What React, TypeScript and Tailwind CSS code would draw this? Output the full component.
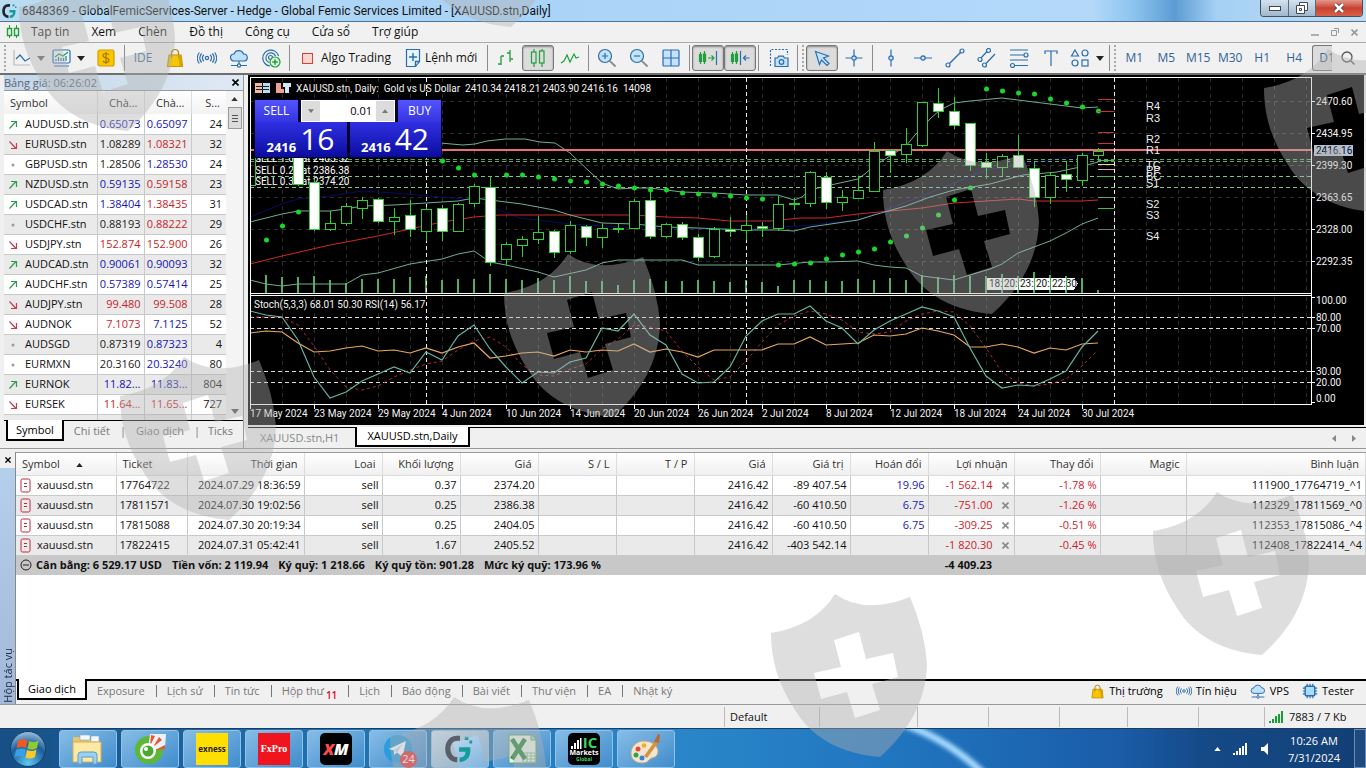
import React, { useState } from "react";

const BLUE = "#2a6db0";
const GREEN = "#1fa03c";

// --- DATA ---

const menuItems = ["Tap tin", "Xem", "Chèn", "Đồ thị", "Công cụ", "Cửa sổ", "Trợ giúp"];
const timeframes = ["M1", "M5", "M15", "M30", "H1", "H4"];

// symbol, direction, bid, bid colour, ask, ask colour, spread
const quotes: [string, string, string, string, string, string, string][] = [
  ["AUDUSD.stn", "up", "0.65073", "b", "0.65097", "b", "24"],
  ["EURUSD.stn", "down", "1.08289", "k", "1.08321", "r", "32"],
  ["GBPUSD.stn", "flat", "1.28506", "k", "1.28530", "b", "24"],
  ["NZDUSD.stn", "up", "0.59135", "b", "0.59158", "r", "23"],
  ["USDCAD.stn", "up", "1.38404", "b", "1.38435", "r", "31"],
  ["USDCHF.stn", "flat", "0.88193", "k", "0.88222", "r", "29"],
  ["USDJPY.stn", "down", "152.874", "r", "152.900", "r", "26"],
  ["AUDCAD.stn", "up", "0.90061", "b", "0.90093", "b", "32"],
  ["AUDCHF.stn", "up", "0.57389", "b", "0.57414", "b", "25"],
  ["AUDJPY.stn", "down", "99.480", "r", "99.508", "r", "28"],
  ["AUDNOK", "down", "7.1073", "r", "7.1125", "b", "52"],
  ["AUDSGD", "flat", "0.87319", "k", "0.87323", "b", "4"],
  ["EURMXN", "flat", "20.3160", "k", "20.3240", "b", "80"],
  ["EURNOK", "up", "11.82...", "b", "11.83...", "b", "804"],
  ["EURSEK", "down", "11.64...", "r", "11.65...", "r", "727"],
  ["EURSGD", "up", "1.45287", "b", "1.45317", "b", "8"],
];

const tone: Record<string, string> = {
  b: "text-[#1414b4]",
  r: "text-[#c81e28]",
  k: "text-[#1a1a1a]",
};

const columns: [string, string][] = [
  ["Symbol", "w-[100px]"],
  ["Ticket", "w-[71px]"],
  ["Thời gian", "w-[117px]"],
  ["Loai", "w-[78px]"],
  ["Khối lượng", "w-[78px]"],
  ["Giá", "w-[78px]"],
  ["S / L", "w-[78px]"],
  ["T / P", "w-[78px]"],
  ["Giá", "w-[78px]"],
  ["Giá trị", "w-[78px]"],
  ["Hoán đổi", "w-[78px]"],
  ["Lợi nhuận", "w-[86px]"],
  ["Thay đổi", "w-[86px]"],
  ["Magic", "w-[86px]"],
  ["Bình luận", ""],
];

const positions = [
  ["17764722", "2024.07.29 18:36:59", "sell", "0.37", "2374.20", "", "", "2416.42", "-89 407.54", "19.96", "-1 562.14", "-1.78 %", "", "111900_17764719_^1"],
  ["17811571", "2024.07.30 19:02:56", "sell", "0.25", "2386.38", "", "", "2416.42", "-60 410.50", "6.75", "-751.00", "-1.26 %", "", "112329_17811569_^0"],
  ["17815088", "2024.07.30 20:19:34", "sell", "0.25", "2404.05", "", "", "2416.42", "-60 410.50", "6.75", "-309.25", "-0.51 %", "", "112353_17815086_^4"],
  ["17822415", "2024.07.31 05:42:41", "sell", "1.67", "2405.52", "", "", "2416.42", "-403 542.14", "", "-1 820.30", "-0.45 %", "", "112408_17822414_^4"],
];

const toolTabs = ["Exposure", "Lịch sử", "Tin tức", "Hộp thư", "Lịch", "Báo động", "Bài viết", "Thư viện", "EA", "Nhật ký"];

// x, body top, body bottom, high, low, filled
const candles: number[][] = [
  [298, 150, 184, 146, 186, 1], [314, 182, 229, 179, 231, 1], [330, 223, 229, 211, 231, 0],
  [346, 206, 223, 203, 226, 0], [362, 200, 208, 197, 219, 0], [378, 199, 221, 198, 223, 1],
  [394, 217, 221, 208, 235, 0], [410, 215, 229, 200, 237, 1], [426, 209, 231, 207, 241, 0],
  [442, 208, 231, 205, 241, 1], [458, 204, 231, 203, 232, 0], [474, 186, 203, 184, 207, 0],
  [490, 187, 262, 176, 266, 1], [506, 244, 259, 242, 265, 0], [522, 239, 245, 236, 257, 0],
  [538, 232, 239, 216, 244, 0], [554, 231, 252, 230, 258, 1], [570, 225, 251, 221, 254, 0],
  [586, 226, 237, 225, 246, 1], [602, 228, 237, 224, 248, 0], [618, 228, 229, 224, 233, 0],
  [634, 201, 228, 199, 229, 0], [650, 200, 236, 190, 239, 1], [666, 224, 236, 223, 238, 0],
  [682, 224, 237, 222, 240, 1], [698, 237, 257, 234, 261, 1], [714, 229, 256, 227, 258, 0],
  [730, 229, 231, 217, 237, 1], [746, 225, 230, 215, 240, 0], [762, 226, 228, 222, 237, 1],
  [778, 204, 228, 196, 231, 0], [794, 203, 204, 198, 210, 0], [810, 172, 203, 171, 207, 0],
  [826, 177, 202, 172, 209, 1], [842, 197, 202, 190, 211, 0], [858, 190, 198, 176, 198, 0],
  [874, 151, 191, 142, 191, 0], [890, 150, 155, 149, 173, 1], [906, 144, 154, 128, 163, 0],
  [922, 102, 145, 102, 147, 0], [938, 103, 111, 88, 118, 1], [954, 111, 125, 97, 129, 1],
  [970, 123, 165, 123, 171, 1], [986, 162, 167, 153, 179, 1], [1002, 156, 167, 154, 176, 0],
  [1018, 155, 167, 135, 167, 1], [1034, 168, 197, 162, 207, 1], [1050, 175, 197, 172, 204, 0],
  [1066, 174, 179, 161, 192, 1], [1082, 155, 180, 153, 186, 0], [1098, 151, 155, 148, 160, 0],
];

// tops of the volume bars, one bar every 16px from x = 266
const volumes = [
  275, 277, 277, 276, 280, 283, 279, 279, 279, 277, 276, 280, 279, 279, 274, 279, 280, 278, 280, 276, 281, 281, 285,
  280, 279, 281, 281, 280, 281, 282, 280, 282, 286, 280, 280, 281, 281, 279, 280, 278, 280, 275, 277, 275,
  276, 276, 274, 276, 272, 275, 276, 278, 290,
];

const sarDots: number[][] = [
  [266, 240], [282, 226], [298, 212], [442, 161], [458, 168], [474, 175], [506, 175], [522, 175], [538, 177],
  [554, 179], [570, 181], [586, 182], [602, 184], [618, 186], [634, 188], [650, 190], [666, 190], [682, 193],
  [698, 194], [714, 195], [730, 196], [746, 198], [762, 199], [778, 265], [794, 264], [810, 263], [826, 259],
  [842, 255], [858, 252], [874, 249], [890, 242], [906, 236], [922, 228], [938, 215], [954, 200], [970, 188],
  [986, 89], [1002, 91], [1018, 93], [1034, 94], [1050, 99], [1066, 103], [1082, 107], [1098, 111],
];

const bandUpper =
  "440,143 463,145 475,144 487,141 505,139 525,139 540,142 555,143 570,153 590,172 602,183 618,189 634,188 650,188 666,190 682,192 714,193 746,195 778,195 794,200 802,197 810,190 826,186 858,179 866,173 874,166 890,156 906,146 915,135 930,119 940,110 954,103 970,101 1002,98 1034,102 1066,106 1082,108 1098,107";
const bandMiddle =
  "250,222 282,214 298,211 330,211 346,209 362,206 394,205 426,203 458,201 474,198 490,200 522,204 554,210 570,215 602,223 634,224 666,227 698,228 746,230 778,230 794,231 810,227 858,220 874,215 906,206 930,197 954,190 990,184 1023,175 1057,172 1080,167 1098,162";
const bandLower =
  "250,280 266,284 282,286 298,284 346,284 362,275 378,273 410,264 442,259 458,254 474,251 490,262 506,265 538,272 554,277 586,270 602,263 618,260 634,260 682,260 698,265 778,265 810,262 826,262 858,261 874,265 890,267 906,268 922,276 954,280 970,275 990,269 1002,264 1018,253 1034,247 1050,241 1066,233 1082,224 1098,218";
const slowAverage =
  "250,264 282,256 330,245 378,236 410,229 442,222 474,217 500,215 634,215 666,217 698,218 730,221 770,221 800,218 826,218 858,214 890,211 922,208 954,203 1018,199 1034,201 1082,201 1098,200";
const blueAverage =
  "250,217 282,204 298,199 330,196 362,191 394,193 442,197 474,200 520,218 570,224 640,228 740,229 800,226 858,220 922,196 986,170 1050,160 1098,152";

const stoch =
  "250,311 266,315 282,317 298,340 314,377 330,398 346,392 362,381 378,374 394,367 410,373 426,352 442,360 458,336 474,325 490,349 506,367 522,383 538,372 554,373 570,362 586,358 602,328 618,331 634,314 650,335 666,345 682,374 698,383 714,382 730,367 746,336 762,321 778,314 794,314 810,306 826,321 842,328 858,344 874,330 890,321 906,314 922,307 938,311 954,317 970,348 986,376 1002,388 1018,385 1034,386 1050,379 1066,371 1082,347 1098,331";
const stochSignal =
  "250,317 282,317 298,325 314,346 330,370 346,387 362,390 378,386 394,377 410,370 426,364 442,361 458,350 474,341 490,337 506,347 522,365 538,375 554,376 570,369 586,364 602,349 618,339 634,325 650,327 666,331 682,351 698,367 714,380 730,377 746,361 762,342 778,325 794,316 810,311 826,314 842,320 858,332 874,334 890,332 906,321 922,314 938,311 954,312 970,326 986,348 1002,372 1018,383 1034,386 1050,384 1066,379 1082,366 1098,350";
const rsi =
  "250,333 266,331 282,332 298,343 314,352 330,351 346,348 362,346 378,351 394,350 410,353 426,348 442,353 458,347 474,343 490,358 506,356 522,353 538,352 554,356 570,350 586,352 602,350 618,351 634,344 650,352 666,349 682,352 698,357 714,350 762,350 778,344 794,344 810,337 826,345 858,343 874,335 890,336 906,334 922,328 938,331 954,335 970,347 986,347 1002,344 1018,347 1034,353 1050,348 1066,350 1082,344 1098,343";

const dates = ["17 May 2024", "23 May 2024", "29 May 2024", "4 Jun 2024", "10 Jun 2024", "14 Jun 2024", "20 Jun 2024", "26 Jun 2024", "2 Jul 2024", "8 Jul 2024", "12 Jul 2024", "18 Jul 2024", "24 Jul 2024", "30 Jul 2024"];
const prices: [string, number][] = [["2470.60", 101], ["2434.95", 133], ["2399.30", 165], ["2363.65", 197], ["2328.00", 229], ["2292.35", 261]];
const levels: [string, number][] = [["100.00", 300], ["80.00", 317], ["70.00", 328], ["30.00", 371], ["20.00", 382], ["0.00", 398]];
const pivots: [string, number][] = [["R4", 106], ["R3", 118], ["R2", 139], ["R1", 150], ["TC", 165], ["PP", 170], ["BC", 176], ["S1", 183], ["S2", 204], ["S3", 215], ["S4", 236]];
const pivotMarks: [string, number][] = [["#c83232", 99], ["#c83232", 111], ["#c83232", 132], ["#c83232", 143], ["#40c040", 160], ["#e0e080", 164], ["#e0a0c0", 169], ["#40c040", 176], ["#60a080", 197], ["#40c040", 208], ["#607878", 229]];
const events: [string, number][] = [["18:", 989], ["20:", 1004], ["23:", 1020], ["20:", 1036], ["22:30", 1052]];

// --- ICONS ---

const Icon = ({ size = 20, children }: { size?: number; children: React.ReactNode }) => (
  <svg width={size} height={size} viewBox="0 0 20 20" fill="none" stroke={BLUE} strokeWidth="1.2" className="shrink-0" aria-hidden="true">
    {children}
  </svg>
);

const Caret = ({ color = "#222" }) => (
  <svg width="8" height="5" viewBox="0 0 8 5" className="shrink-0" aria-hidden="true">
    <path d="M0 0h8L4 5z" fill={color} />
  </svg>
);

const Cross = ({ size = 7, color = "#000" }) => (
  <svg width={size} height={size} viewBox="0 0 7 7" aria-hidden="true">
    <path d="M.5.5l6 6M6.5.5l-6 6" stroke={color} strokeWidth="1.6" />
  </svg>
);

const BagIcon = ({ size = 20 }) => (
  <Icon size={size}>
    <path d="M4 7h12l1.5 11.5h-15z" fill="#f7c600" stroke="#c89400" />
    <path d="M6.5 10V5a3.5 3.5 0 0 1 7 0v5" stroke="#b08200" />
    <path d="M13 7h3l1.5 11.5h-3z" fill="#d9a400" stroke="none" />
  </Icon>
);

const SignalIcon = ({ size = 20 }) => (
  <Icon size={size}>
    <circle cx="10" cy="10" r="1.6" />
    <path d="M6.8 6.8a4.5 4.5 0 0 0 0 6.4M13.2 6.8a4.5 4.5 0 0 1 0 6.4M4.6 5.5a6.5 6.5 0 0 0 0 9M15.4 5.5a6.5 6.5 0 0 1 0 9M2.3 4.5a9 9 0 0 0 0 11M17.7 4.5a9 9 0 0 1 0 11" />
  </Icon>
);

const CloudIcon = ({ size = 20 }) => (
  <Icon size={size}>
    <path d="M5 13a3.5 3.5 0 0 1 0-7 5 5 0 0 1 9.5 0A3.5 3.5 0 0 1 15 13z" fill="#bfe0fa" />
    <path d="M10 13v3M2 17.5h6M12 17.5h6" />
    <circle cx="10" cy="17.5" r="1.6" />
  </Icon>
);

const ChipIcon = ({ size = 16 }) => (
  <Icon size={size}>
    <rect x="4" y="4" width="12" height="12" rx="1.5" fill="#a9dcf8" strokeWidth="1.8" />
    <path d="M6.5 1v3M10 1v3M13.5 1v3M6.5 16v3M10 16v3M13.5 16v3M1 6.5h3M1 10h3M1 13.5h3M16 6.5h3M16 10h3M16 13.5h3" strokeWidth="1.5" />
  </Icon>
);

const BrandMark = ({ size = 16, dark = "#1c2733" }) => (
  <svg width={size} height={size} viewBox="0 0 32 32" fill="none" aria-hidden="true">
    <path d="M16 4.500H13C6.500 4.500 3 9.500 3 16s4 11.500 10 11.500" stroke={dark} strokeWidth="5.5" />
    <path d="M15 16.500h12M24.500 14v4c0 6-4 9.500-9 9.500" stroke="#159c9c" strokeWidth="5" />
    <path d="M21 3h4v3.500h-4zM26 7h3v3h-3z" fill="#159c9c" />
  </svg>
);

// --- TOOLBAR ---

const ToolButton = ({ label, pressed = false, wide = false, children }: any) => (
  <button
    aria-label={label}
    className={`flex h-[26px] shrink-0 items-center justify-center gap-1.5 rounded-[3px] ${wide ? "w-10" : "w-8"} ${
      pressed ? "border border-[#777] bg-[#dcdcdc] shadow-[inset_0_1px_2px_rgba(0,0,0,0.4)]" : ""
    }`}
  >
    {children}
  </button>
);

const Divider = () => <span className="mx-0.5 h-[26px] w-px shrink-0 bg-[#8c8c8c]" />;
const Grip = () => <span className="mx-0.5 h-[26px] w-0 shrink-0 border-l-2 border-dotted border-[#aaa]" />;

const Toolbar = () => (
  <div className="flex h-8 items-center overflow-hidden border-b-2 border-[#6e6e6e] bg-[#f1f1f1] pl-0.5">
    <Grip />
    <ToolButton label="Đường" wide>
      <Icon>
        <path d="M3 2v15h16" stroke="#bbb" />
        <path d="M5 11l4-4 5 6 5-3" />
      </Icon>
      <Caret color="#666" />
    </ToolButton>
    <ToolButton label="Chỉ báo" wide>
      <Icon>
        <rect x="2" y="2" width="17" height="13" rx="1.5" fill="#f3f9fe" />
        <path d="M4 9l4-3 4 2 5-4" stroke={GREEN} />
        <path d="M5 13v-2M7.5 13v-4M10 13v-3M12.5 13v-3M15 13v-5M3 18h15" />
      </Icon>
      <Caret />
    </ToolButton>
    <span className="w-0.5 shrink-0" />
    <ToolButton label="Tiền tệ">
      <Icon>
        <rect x="2" y="2" width="16" height="16" rx="2" fill="#f9c700" stroke="#d79a00" />
        <path d="M13 7c-.6-1-1.600-1.500-3-1.500S7 6.300 7 7.600c0 3 6 1.700 6 4.700 0 1.300-1.400 2.200-3 2.200s-2.600-.6-3.200-1.600M10 4v12" stroke="#a87400" />
      </Icon>
    </ToolButton>
    <Divider />
    <ToolButton label="IDE">
      <span className="text-[12px] text-[#3c6c9c]">IDE</span>
    </ToolButton>
    <ToolButton label="Thị trường"><BagIcon /></ToolButton>
    <ToolButton label="Tín hiệu"><SignalIcon /></ToolButton>
    <ToolButton label="VPS"><CloudIcon /></ToolButton>
    <ToolButton label="Thêm">
      <Icon>
        <path d="M9 18A8 8 0 1 1 17.500 8M8 14.500A5 5 0 1 1 14.500 8" />
        <circle cx="9.5" cy="9.5" r="2" />
        <circle cx="14" cy="14" r="5" fill="#e4f7e4" stroke={GREEN} />
        <path d="M14 11.200v5.600M11.200 14h5.600" stroke={GREEN} strokeWidth="1.5" />
      </Icon>
    </ToolButton>
    <Divider />
    <button className="flex h-[26px] shrink-0 items-center gap-2 pl-2.5 pr-1">
      <span className="size-[11px] border border-[#d0433c] bg-[#fbd5d0]" />
      Algo Trading
    </button>
    <button className="flex h-[26px] shrink-0 items-center gap-0.5 px-2">
      <Icon>
        <path d="M3.5 1.500h13v12l-4 5h-9z" fill="#e8f4fd" />
        <path d="M10 5v8M6 9h8M16.500 13.500h-4v5" strokeWidth="1.4" />
      </Icon>
      Lệnh mới
    </button>
    <Divider />
    <ToolButton label="Thanh">
      <Icon>
        <path d="M5 8v9M5 8h3M2 16h3M14 2v12M11 5h3M14 11h3" stroke={GREEN} strokeWidth="1.3" />
      </Icon>
    </ToolButton>
    <ToolButton label="Nến" pressed>
      <Icon>
        <path d="M6 1v3M6 15v4M14 1v2M14 15v4" stroke={GREEN} />
        <rect x="3.5" y="4" width="4.5" height="11" stroke={GREEN} />
        <rect x="11.5" y="3" width="4.5" height="12" stroke={GREEN} />
      </Icon>
    </ToolButton>
    <ToolButton label="Đường kẻ">
      <Icon>
        <path d="M1 15l3-2 3-6 3 7 4-8 2 4 3-1" stroke={GREEN} />
      </Icon>
    </ToolButton>
    <Divider />
    <ToolButton label="Phóng to">
      <Icon>
        <circle cx="8" cy="8" r="6.5" fill="#c4e3fb" />
        <path d="M5 8h6M8 5v6" />
        <path d="M12.800 12.800l5.700 5.700" stroke="#888" strokeWidth="1.8" />
      </Icon>
    </ToolButton>
    <ToolButton label="Thu nhỏ">
      <Icon>
        <circle cx="8" cy="8" r="6.5" fill="#c4e3fb" />
        <path d="M5 8h6" />
        <path d="M12.800 12.800l5.700 5.700" stroke="#888" strokeWidth="1.8" />
      </Icon>
    </ToolButton>
    <ToolButton label="Xếp cửa sổ">
      <Icon>
        <rect x="2" y="2" width="16" height="16" rx="1" fill="#c4e3fb" />
        <path d="M10 2v16M2 10h16" />
      </Icon>
    </ToolButton>
    <Divider />
    <ToolButton label="Tự cuộn" pressed>
      <Icon>
        <path d="M2.500 4v12M6.500 3v13" stroke={GREEN} />
        <path d="M1.500 6.500h2v7h-2zM5.500 6h2v7.500h-2z" stroke={GREEN} />
        <path d="M10 10h6M13.500 7.500L16 10l-2.500 2.500" stroke={GREEN} />
        <path d="M18.500 3v14" />
      </Icon>
    </ToolButton>
    <ToolButton label="Dịch đồ thị" pressed>
      <Icon>
        <path d="M2.500 4v12M6.500 3v13" stroke={GREEN} />
        <path d="M1.500 6.500h2v7h-2zM5.500 6h2v7.500h-2z" stroke={GREEN} />
        <path d="M10.500 3v14M19.500 10h-6M16 7.500L13.500 10l2.500 2.500" />
      </Icon>
    </ToolButton>
    <Divider />
    <span className="w-0.5 shrink-0" />
    <ToolButton label="Chụp ảnh">
      <Icon>
        <path d="M1.500 18V1.500h17V7" strokeDasharray="2 1.5" />
        <path d="M6 10h2.500l1.200-1.800h4.600L15.500 10H19v8.500H6z" fill="#c4e3fb" />
        <circle cx="12.5" cy="14" r="2.3" />
      </Icon>
    </ToolButton>
    <Divider />
    <Grip />
    <ToolButton label="Con trỏ" pressed>
      <Icon>
        <path d="M3.500 3.500l13 4.500-5 2 5.500 5.500-2 2L9.500 12l-2 4.500z" fill="#c4e3fb" />
      </Icon>
    </ToolButton>
    <ToolButton label="Chữ thập">
      <Icon>
        <path d="M10 1.500v6.300M10 12.200v6.300M1.500 10h6.300M12.200 10h6.300" />
        <circle cx="10" cy="10" r="2.2" fill="#c4e3fb" />
      </Icon>
    </ToolButton>
    <Divider />
    <ToolButton label="Đường dọc">
      <Icon>
        <path d="M10 1.500v6.300M10 12.200v6.300" />
        <circle cx="10" cy="10" r="2.2" fill="#c4e3fb" />
      </Icon>
    </ToolButton>
    <ToolButton label="Đường ngang">
      <Icon>
        <path d="M1 10h6.800M12.200 10H19" />
        <circle cx="10" cy="10" r="2.2" fill="#c4e3fb" />
      </Icon>
    </ToolButton>
    <ToolButton label="Xu hướng">
      <Icon>
        <path d="M4.500 15.500l11-11" strokeWidth="1.4" />
        <circle cx="3" cy="17" r="2" />
        <circle cx="17" cy="3" r="2" />
      </Icon>
    </ToolButton>
    <ToolButton label="Kênh">
      <Icon>
        <path d="M4 10l6-6.500M9 15.500L18 6" />
        <circle cx="3" cy="11.5" r="2" />
        <circle cx="11.5" cy="2.5" r="2" />
        <circle cx="7.5" cy="17" r="2" />
      </Icon>
    </ToolButton>
    <ToolButton label="Fibonacci">
      <Icon>
        <path d="M1 2h18M1 7h14M1 12h18M6 17.500h13" />
        <circle cx="17" cy="7" r="2" />
        <circle cx="3.5" cy="17.5" r="2" />
      </Icon>
    </ToolButton>
    <ToolButton label="Văn bản">
      <Icon>
        <path d="M4 6V3h12v3M10 3v15" />
      </Icon>
    </ToolButton>
    <ToolButton label="Hình khối" wide>
      <Icon>
        <path d="M5 2l3.500 6h-7z" />
        <circle cx="15" cy="5" r="3" />
        <circle cx="5" cy="15" r="3" />
        <rect x="12" y="12" width="6" height="6" />
      </Icon>
      <Caret />
    </ToolButton>
    <Divider />
    <Grip />
    {timeframes.map((tf) => (
      <ToolButton key={tf} label={tf}>
        <span className="text-[12px] text-[#2f6496]">{tf}</span>
      </ToolButton>
    ))}
    <button className="ml-0.5 h-[26px] w-5 shrink-0 overflow-hidden rounded-l-[3px] border border-r-0 border-[#777] bg-[#dcdcdc] pl-1.5 text-left text-[12px] text-[#2f6496]">
      D1
    </button>
    <button aria-label="Tìm kiếm" className="ml-auto mr-2.5 shrink-0">
      <svg width="16" height="16" viewBox="0 0 16 16" fill="none" stroke="#555" strokeWidth="1.3">
        <circle cx="7" cy="7" r="5" />
        <path d="M11 11l3.500 3.500" />
      </svg>
    </button>
  </div>
);

// --- MARKET WATCH ---

const Direction = ({ dir }: { dir: string }) => (
  <svg width="10" height="10" viewBox="0 0 10 10" fill="none" className="inline-block" aria-hidden="true">
    {dir === "up" && <path d="M1.500 8.500l6.500-7M3 1.500h5.500V7" stroke="#2c9c4c" strokeWidth="1.2" />}
    {dir === "down" && <path d="M1.500 1.500l6.500 7M3 8.500h5.500V3" stroke="#c04050" strokeWidth="1.2" />}
    {dir === "flat" && <circle cx="5" cy="5" r="1.5" fill="#999" />}
  </svg>
);

const MarketWatch = () => (
  <aside className="flex w-[244px] shrink-0 flex-col border-r border-[#999] bg-[#f0f0f0] pl-1">
    <div className="flex h-[15px] items-center justify-between bg-gradient-to-r from-[#c3d6ea] to-[#dfe9f4] pr-1 text-[11px] text-[#5c6670]">
      Bảng giá: 06:26:02
      <button aria-label="Đóng"><Cross /></button>
    </div>
    <div className="flex min-h-0 flex-1 basis-0 overflow-hidden border-t border-[#999]">
      <div className="flex-1 overflow-hidden bg-white">
        <table className="w-full table-fixed border-collapse">
          <thead>
            <tr className="h-[23px] bg-gradient-to-b from-white to-[#f2f2f2] text-[11px] text-[#333]">
              <th className="w-[93px] border-r border-[#ddd] pl-1.5 text-left font-normal">Symbol</th>
              <th className="w-[47px] border-r border-[#ddd] pr-1.5 text-right font-normal">Chà...</th>
              <th className="w-[47px] border-r border-[#ddd] pr-1.5 text-right font-normal">Chà...</th>
              <th className="pr-1.5 text-right font-normal">S...</th>
            </tr>
          </thead>
          <tbody>
            {quotes.map(([symbol, dir, bid, bidTone, ask, askTone, spread], i) => (
              <tr key={symbol} className={`h-5 border-b border-[#c9c9c9] text-[11px] ${i % 2 ? "bg-[#eaeaea]" : "bg-white"}`}>
                <td className="overflow-hidden whitespace-nowrap border-r border-[#c9c9c9] pl-1">
                  <span className="mr-[7px]"><Direction dir={dir} /></span>
                  {symbol}
                </td>
                <td className={`border-r border-[#c9c9c9] pr-[3px] text-right ${tone[bidTone]}`}>{bid}</td>
                <td className={`border-r border-[#c9c9c9] pr-[3px] text-right ${tone[askTone]}`}>{ask}</td>
                <td className="pr-1 text-right">{spread}</td>
              </tr>
            ))}
          </tbody>
        </table>
      </div>
      <div className="flex w-[17px] flex-col items-center bg-[#f4f4f4] py-1.5">
        <svg width="7" height="4" viewBox="0 0 8 5"><path d="M0 5h8L4 0z" fill="#333" /></svg>
        <div className="mt-1.5 flex h-[22px] w-3.5 flex-col items-center justify-center gap-0.5 border border-[#999] bg-[#dcdcdc]">
          <span className="h-px w-1.5 bg-[#555]" />
          <span className="h-px w-1.5 bg-[#555]" />
          <span className="h-px w-1.5 bg-[#555]" />
        </div>
        <span className="mt-auto"><Caret color="#555" /></span>
      </div>
    </div>
    <div className="flex h-7 items-start border-t border-black text-[11px] text-[#777]">
      <button className="-mt-px ml-0.5 h-[21px] border-2 border-t-0 border-black bg-white px-2 text-black">Symbol</button>
      <button className="h-5 px-2.5">Chi tiết</button>
      <span className="h-5 leading-5">|</span>
      <button className="h-5 px-2.5">Giao dịch</button>
      <span className="h-5 leading-5">|</span>
      <button className="h-5 px-2">Ticks</button>
    </div>
  </aside>
);

// --- CHART ---

const Chart = () => (
  <svg className="block h-[350px] w-full bg-black" fill="none" shapeRendering="crispEdges" role="img" aria-label="XAUUSD.stn, Daily">
    <g transform="translate(-248 -75)">
      {/* grid */}
      <g stroke="#2c2c2c" strokeDasharray="4 4">
        {Array.from({ length: 33 }, (_, i) => (
          <path key={i} d={`M${282.5 + i * 32} 78V293M${282.5 + i * 32} 297V404`} />
        ))}
        {prices.map(([label, y]) => (
          <path key={label} d={`M250 ${y + 0.5}H1311`} />
        ))}
      </g>

      {/* volumes */}
      {volumes.map((top, i) => (
        <path key={i} d={`M${266 + i * 16} ${top}V293`} stroke="#4fae68" strokeWidth="2" />
      ))}

      <g shapeRendering="auto">
        <polyline points={blueAverage} stroke="#0a0a60" />
        <polyline points={slowAverage} stroke="#d02828" />
        <polyline points={bandUpper} stroke="#6fae94" />
        <polyline points={bandMiddle} stroke="#6fae94" />
        <polyline points={bandLower} stroke="#6fae94" />
      </g>

      {/* open orders and current price */}
      <path d="M250 159.5H1311M250 161.5H1311" stroke="#5aa868" strokeDasharray="4 3" />
      <path d="M250 176.5H1311M250 187.5H1311" stroke="#82c08e" strokeDasharray="4 3" />
      <path d="M250 150H1311" stroke="#e87070" strokeWidth="2" />

      <g fill="#fff" fontSize="10" className="font-['Roboto',sans-serif]">
        <text x="255" y="162">SELL 1.67 at 2405.52</text>
        <text x="255" y="174">SELL 0.25 at 2386.38</text>
        <text x="255" y="185">SELL 0.37 at 2374.20</text>
      </g>

      {/* period separators */}
      <path d="M426.5 78V404M746.5 78V404M1114.5 78V404" stroke="#eee" strokeDasharray="4 3" />

      {/* candles */}
      <path d="M250 185.5H255.5V157" stroke="#30c830" />
      {candles.map(([x, top, bottom, high, low, filled]) => (
        <g key={x} stroke="#30d030">
          <path d={`M${x + 0.5} ${high}V${low}`} />
          <rect x={x - 4.5} y={top + 0.5} width="10" height={Math.max(bottom - top, 1)} fill={filled ? "#fff" : "#000"} />
        </g>
      ))}

      <g fill="#18d82c" shapeRendering="auto">
        {sarDots.map(([x, y]) => (
          <circle key={x} cx={x + 0.5} cy={y} r="2.5" />
        ))}
      </g>

      {/* pivot levels */}
      {pivotMarks.map(([color, y]) => (
        <path key={y} d={`M1098 ${y + 0.5}H1114`} stroke={color} />
      ))}
      <g fill="#eee" fontSize="11" className="font-['Liberation_Sans',sans-serif]">
        {pivots.map(([label, y]) => (
          <text key={label} x="1146" y={y + 4}>{label}</text>
        ))}
      </g>

      {/* event flags */}
      <path d="M987 277.500h87l4 6-4 6h-87z" fill="#fff" />
      <g fill="#111" fontSize="10" className="font-['Roboto',sans-serif]">
        {events.map(([label, x]) => (
          <text key={x} x={x} y="287">{label}</text>
        ))}
      </g>
      <path d="M1002 276v14M1018 276v14M1034 274v16M1050 276v14M1066 276v14" stroke="#3cae50" />

      {/* oscillators */}
      <path d="M250 317.5H1311M250 328.5H1311M250 371.5H1311M250 382.5H1311" stroke="#ddd" strokeDasharray="4 3" />
      <g shapeRendering="auto">
        <polyline points={stochSignal} stroke="#b02a34" strokeDasharray="3 3" />
        <polyline points={rsi} stroke="#e8a858" strokeWidth="1.2" />
        <polyline points={stoch} stroke="#66b4a4" strokeWidth="1.2" />
      </g>

      {/* frames */}
      <path d="M250.5 404V77.5H1311.5V404.5H250M250 293.5H1311M250 295.5H1311" stroke="#fff" />
      {dates.map((_, i) => (
        <path key={i} d={`M${250.5 + i * 64} 404v5`} stroke="#fff" />
      ))}
      <path d="M1311 101.5h4M1311 133.5h4M1311 165.5h4M1311 197.5h4M1311 229.5h4M1311 261.5h4M1311 297.5h4M1311 317.5h4M1311 328.5h4M1311 371.5h4M1311 382.5h4M1311 402.5h4" stroke="#fff" />
      <rect x="1314" y="145" width="39" height="11" fill="#b4c0d4" />

      <g fill="#f2f2f2" fontSize="10" className="font-['Roboto',sans-serif]">
        {prices.map(([label, y]) => (
          <text key={label} x="1316" y={y + 4}>{label}</text>
        ))}
        <text x="1316" y="154" fill="#111">2416.16</text>
        {levels.map(([label, y]) => (
          <text key={label} x="1316" y={y + 4}>{label}</text>
        ))}
        {dates.map((label, i) => (
          <text key={label} x={250 + i * 64} y="417">{label}</text>
        ))}
        <text x="254" y="308">Stoch(5,3,3) 68.01 50.30 RSI(14) 56.17</text>
        <text x="296" y="92">XAUUSD.stn, Daily:{"\u00a0\u00a0"}Gold vs US Dollar{"\u00a0\u00a0"}2410.34 2418.21 2403.90 2416.16{"\u00a0\u00a0"}14098</text>
      </g>

      {/* chart corner icons */}
      <g transform="translate(255 83)">
        <path d="M0 0h7v10h-7z" fill="#f3b8a8" />
        <path d="M8 0h7v10h-7z" fill="#b8dcf6" />
        <path d="M1 3h13M1 6h13" stroke="#222" />
      </g>
      <g transform="translate(276 83)">
        <path d="M0 0h5v10h-5zM5 6h3v4h-3z" fill="#f0a090" />
        <path d="M7 0h8v4h-2v6h-4v-6h-2z" fill="#cfe8fa" />
      </g>
    </g>
  </svg>
);

const OneClickTrade = () => {
  const [lots, setLots] = useState("0.01");
  return (
    <div className="absolute left-1.5 top-6 flex w-[188px] flex-col bg-[#05052c] p-px text-white">
      <div className="flex h-[22px] items-stretch gap-[3px]">
        <button className="w-[43px] bg-gradient-to-b from-[#5454ff] to-[#3434e0] text-[12px]">SELL</button>
        <div className="flex flex-1 bg-white p-px">
          <button aria-label="Giảm" className="flex w-[18px] items-center justify-center bg-[#dcdcdc]">
            <svg width="6" height="4" viewBox="0 0 8 5"><path d="M0 0h8L4 5z" fill="#777" /></svg>
          </button>
          <input
            aria-label="Khối lượng"
            value={lots}
            onChange={(e) => setLots(e.target.value)}
            className="w-0 flex-1 bg-white px-1 text-right text-[11px] text-black outline-none"
          />
          <button aria-label="Tăng" className="flex w-[18px] items-center justify-center bg-[#dcdcdc]">
            <svg width="6" height="4" viewBox="0 0 8 5"><path d="M0 5h8L4 0z" fill="#777" /></svg>
          </button>
        </div>
        <button className="w-[43px] bg-gradient-to-b from-[#5454ff] to-[#3434e0] text-[12px]">BUY</button>
      </div>
      <div className="flex h-[35px] gap-[3px]">
        <button className="flex flex-1 items-end justify-end gap-1 bg-gradient-to-b from-[#2f2fe2] to-[#0b0ba0] pr-3">
          <b className="text-[13px] leading-[20px]">2416</b>
          <span className="text-[30px] leading-[36px]">16</span>
        </button>
        <button className="flex flex-1 items-end justify-end gap-1 bg-gradient-to-b from-[#2f2fe2] to-[#0b0ba0] pr-3">
          <b className="text-[13px] leading-[20px]">2416</b>
          <span className="text-[30px] leading-[36px]">42</span>
        </button>
      </div>
    </div>
  );
};

// --- TOOLBOX ---

const Toolbox = () => (
  <section className="flex flex-1 border-t border-[#999] bg-[#f0f0f0] pt-[3px]">
    <div className="flex w-4 shrink-0 flex-col items-center border-r border-[#888]">
      <button aria-label="Đóng" className="flex h-4 items-center"><Cross size={6} /></button>
      <div className="flex w-full flex-1 bg-gradient-to-b from-[#b4cfec] to-[#a3b8d6]">
        <span className="mb-px mt-auto rotate-180 text-[11px] leading-[15px] text-[#1e2c50] [writing-mode:vertical-rl]">Hộp tác vụ</span>
      </div>
    </div>
    <div className="flex min-w-0 flex-1 flex-col">
      <div className="flex-1 border-t border-[#999] bg-white">
        <table className="w-full table-fixed border-collapse whitespace-nowrap text-[11px]">
          <thead>
            <tr className="h-[22px] bg-gradient-to-b from-white to-[#f0f0f0] text-[#333]">
              {columns.map(([label, width], i) => (
                <th key={i} className={`border-b border-r border-[#ddd] px-1.5 font-normal ${width} ${i < 2 ? "text-left" : "text-right"}`}>
                  {label}
                  {i === 0 && (
                    <svg width="7" height="4" viewBox="0 0 8 5" className="ml-4 inline-block"><path d="M0 5h8L4 0z" fill="#222" /></svg>
                  )}
                </th>
              ))}
            </tr>
          </thead>
          <tbody>
            {positions.map((row, i) => (
              <tr key={row[0]} className={`h-5 border-b border-[#c9c9c9] ${i % 2 ? "bg-[#eaeaea]" : "bg-white"}`}>
                <td className="border-r border-[#c9c9c9] pl-1">
                  <span className="flex items-center gap-1.5">
                    <svg width="11" height="15" viewBox="0 0 11 15" fill="none" stroke="#c0283c">
                      <rect x="1" y="1" width="9" height="13" rx="1.5" />
                      <path d="M4 5.500h3M4 8.500h3" />
                    </svg>
                    xauusd.stn
                  </span>
                </td>
                {row.map((cell, c) => {
                  if (c === 10) {
                    return (
                      <td key={c} className="border-r border-[#c9c9c9] pr-[5px] text-[#d0202c]">
                        <span className="flex items-center justify-end gap-[9px]">
                          {cell}
                          <button aria-label="Đóng lệnh"><Cross color="#888" /></button>
                        </span>
                      </td>
                    );
                  }
                  return (
                    <td
                      key={c}
                      className={`border-r border-[#c9c9c9] px-[3px] ${c === 0 ? "text-left" : "text-right"} ${
                        c === 9 ? "text-[#1a1ab8]" : c === 11 ? "text-[#d0202c]" : ""
                      }`}
                    >
                      {cell}
                    </td>
                  );
                })}
              </tr>
            ))}
            <tr className="h-5 bg-[#c8c8c8] font-bold">
              <td colSpan={11} className="pl-1">
                <span className="flex items-center gap-1">
                  <svg width="12" height="12" viewBox="0 0 12 12" fill="none" stroke="#222"><circle cx="6" cy="6" r="5" /><path d="M3 6h6" /></svg>
                  <span className="flex gap-2.5">
                    <span>Cân bằng: 6 529.17 USD</span>
                    <span>Tiền vốn: 2 119.94</span>
                    <span>Ký quỹ: 1 218.66</span>
                    <span>Ký quỹ tồn: 901.28</span>
                    <span>Mức ký quỹ: 173.96 %</span>
                  </span>
                </span>
              </td>
              <td className="pr-[22px] text-right">-4 409.23</td>
              <td colSpan={3} />
            </tr>
          </tbody>
        </table>
      </div>
      <div className="flex h-[25px] items-start border-t-2 border-black text-[11px] text-[#777]">
        <button className="-mt-0.5 ml-px h-[21px] border-2 border-t-0 border-black bg-white px-[9px] text-black">Giao dịch</button>
        {toolTabs.map((tab, i) => (
          <button key={tab} className={`mt-1 flex h-3 items-center pl-2.5 pr-[11px] ${i > 0 ? "border-l border-[#777]" : ""}`}>
            {tab}
            {tab === "Hộp thư" && <span className="mt-2 pl-0.5 text-[10px] font-semibold text-[#d0102c]">11</span>}
          </button>
        ))}
        <div className="ml-auto flex h-5 items-center gap-[13px] pr-3 text-black">
          <a href="#market" className="flex items-center gap-1"><BagIcon size={15} />Thị trường</a>
          <a href="#signals" className="flex items-center gap-1"><SignalIcon size={16} />Tín hiệu</a>
          <a href="#vps" className="flex items-center gap-1"><CloudIcon size={16} />VPS</a>
          <a href="#tester" className="flex items-center gap-1"><ChipIcon />Tester</a>
        </div>
      </div>
    </div>
  </section>
);

const StatusBar = () => (
  <footer className="flex h-6 items-center border-t border-[#999] bg-[#f0f0f0] text-[11px]">
    <span className="flex-1" />
    <span className="flex h-5 w-[95px] items-center border-l border-[#bbb] pl-[5px]">Default</span>
    <span className="h-5 w-[98px] border-l border-[#bbb]" />
    <span className="h-5 w-[71px] border-l border-[#bbb]" />
    <span className="h-5 w-[71px] border-l border-[#bbb]" />
    <span className="h-5 w-[68px] border-l border-[#bbb]" />
    <span className="h-5 w-[71px] border-l border-[#bbb]" />
    <span className="h-5 w-[66px] border-l border-[#bbb]" />
    <span className="flex h-5 w-[102px] items-center gap-1.5 border-l border-[#bbb] pl-1">
      <svg width="14" height="12" viewBox="0 0 14 12"><path d="M0 10h2v2H0zM3 8h2v4H3zM6 5h2v7H6zM9 3h2v9H9zM12 0h2v12h-2z" fill="#16a034" /></svg>
      7883 / 7 Kb
    </span>
  </footer>
);

// --- TASKBAR ---

const TaskButton = ({ label, active = false, children }: any) => (
  <button
    aria-label={label}
    className={`flex h-[38px] w-[58px] shrink-0 items-center justify-center rounded-[3px] border border-[#8fc4ea] ${
      active ? "bg-gradient-to-br from-[#d4e6f4] to-[#7fb2dc]" : "bg-gradient-to-br from-[#86bde6] to-[#3f8ccc]"
    }`}
  >
    {children}
  </button>
);

const Taskbar = () => (
  <div className="relative flex h-10 items-center gap-1 overflow-hidden border-t border-[#1c3c60] bg-[linear-gradient(90deg,#174f86_0%,#1f6cab_20%,#2a86c8_50%,#2176c0_65%,#1a5ca8_82%,#154a88_88%,#123f74_100%)]">
    <svg className="absolute inset-0 h-full w-full" aria-hidden="true">
      <defs>
        <filter id="glow"><feGaussianBlur stdDeviation="2" /></filter>
      </defs>
      <path d="M905-4C935 6 960 22 985 46" stroke="#a8dcff" strokeWidth="7" fill="none" filter="url(#glow)" />
    </svg>
    <div className="relative flex h-full w-[55px] shrink-0 items-center justify-center">
      <button aria-label="Start">
        <svg width="38" height="38" viewBox="0 0 38 38">
          <defs>
            <radialGradient id="orb" cx=".5" cy=".9" r=".9">
              <stop offset="0" stopColor="#5cc8f4" />
              <stop offset=".6" stopColor="#1d5c98" />
              <stop offset="1" stopColor="#9cc4e0" />
            </radialGradient>
          </defs>
          <circle cx="19" cy="19" r="17.5" fill="url(#orb)" stroke="#123c64" />
          <path d="M9 11c3.500-2.500 7-2 9.500-.5L17 18c-3-1.500-6-1.500-9.500.5z" fill="#ee5a24" />
          <path d="M20 11c3 1.500 6.500 1.500 9.500-.5L28 18c-3.500 2-6.500 2-9.500.5z" fill="#8ecb30" />
          <path d="M7 20c3.500-2 6.500-2 9.500-.5L15 27c-3-1.500-6-1.500-9.500.5z" fill="#38a0e8" />
          <path d="M18 20c3 1.500 6 1.500 9.500-.5L26 27c-3.500 2-6.500 2-9.500.5z" fill="#fcc828" />
        </svg>
      </button>
    </div>
    <div className="relative flex flex-1 items-center gap-1">
      <TaskButton label="Explorer">
        <svg width="34" height="32" viewBox="0 0 34 32">
          <path d="M2 4h9l2 3h14v20H2z" fill="#e8c46a" />
          <path d="M9 2h10v5H9zM20 3h8v6h-8z" fill="#f4f8fc" stroke="#8aa8c0" strokeWidth=".6" />
          <path d="M2 9h28v20H2z" fill="#fbe9a4" stroke="#d8b050" />
          <path d="M7 31v-9a3 3 0 0 1 3-3h13a3 3 0 0 1 3 3v9h-4v-7H11v7z" fill="#9cd0f0" stroke="#5a9ccc" />
        </svg>
      </TaskButton>
      <TaskButton label="Cốc Cốc">
        <svg width="34" height="34" viewBox="0 0 34 34">
          <circle cx="16" cy="18" r="14" fill="#5cb836" />
          <path d="M15 18L17 2l16 0-1 14z" fill="#e8f2fa" />
          <path d="M17 14l1-11 4 1zM20 15l6-10 3 3zM22 18l10-5v4z" fill="#e85830" />
          <circle cx="15" cy="19" r="8" fill="#fff" />
          <circle cx="15" cy="19" r="5.5" fill="#4aa82e" />
          <circle cx="13" cy="17" r="2" fill="#fff" />
        </svg>
      </TaskButton>
      <TaskButton label="exness">
        <span className="flex size-8 items-center justify-center bg-[#ffde02] text-[8px] font-bold text-[#222]">exness</span>
      </TaskButton>
      <TaskButton label="FxPro">
        <span className="flex size-8 items-center justify-center bg-[#f0141e] font-['Liberation_Serif',serif] text-[10px] font-bold text-white">FxPro</span>
      </TaskButton>
      <TaskButton label="XM">
        <span className="flex size-8 items-center justify-center rounded-[5px] bg-black text-[16px] font-extrabold italic text-white">
          <span className="text-[#ff4a4a]">X</span>M
        </span>
      </TaskButton>
      <TaskButton label="Telegram">
        <span className="relative">
          <svg width="30" height="30" viewBox="0 0 30 30">
            <circle cx="15" cy="15" r="14" fill="#2c9cdc" />
            <path d="M6 15l17-8-3.500 16-5.500-4.500-3 2.500v-4.500z" fill="#fff" />
            <path d="M11 16.500l9-7-6 9z" fill="#b8dcf2" />
          </svg>
          <span className="absolute -bottom-1 -right-1 flex size-[17px] items-center justify-center rounded-full bg-[#e8383c] text-[11px] text-white">24</span>
        </span>
      </TaskButton>
      <TaskButton label="Global Femic Services" active><BrandMark size={30} /></TaskButton>
      <TaskButton label="Excel">
        <svg width="32" height="32" viewBox="0 0 32 32">
          <path d="M3 2h22l5 5v23H3z" fill="#e9f5ea" stroke="#5ba668" />
          <path d="M25 2v5h5" fill="#bfe0c2" stroke="#5ba668" />
          <path d="M17 20h12v9H17zM17 23h12M17 26h12M21 20v9M25 20v9" fill="#fff" stroke="#7cba86" />
          <path d="M6 6l13 20M19 6L6 26" stroke="#2f8c44" strokeWidth="4.5" />
        </svg>
      </TaskButton>
      <TaskButton label="IC Markets">
        <span className="flex size-8 flex-col items-center justify-center rounded-[5px] bg-black text-[7px] font-bold leading-[7px] text-white">
          <span className="flex items-end gap-px text-[15px] leading-[14px] text-[#3cd45c]">
            <svg width="11" height="11" viewBox="0 0 11 11"><path d="M0 8h2v3H0zM3 5h2v6H3zM6 2h2v9H6zM9 0h1.500v11H9z" fill="#fff" /></svg>
            IC
          </span>
          Markets
          <span className="text-[5px] leading-[6px] text-[#3cd45c]">Global</span>
        </span>
      </TaskButton>
      <TaskButton label="Paint">
        <svg width="32" height="32" viewBox="0 0 32 32">
          <path d="M14 8C6 8 1 14 1 20s4 10 11 10 6-4 10-5 6-3 6-7-5-10-14-10z" fill="#f1e6d2" stroke="#c0a880" />
          <circle cx="8" cy="16" r="2.5" fill="#e84838" />
          <circle cx="6" cy="22" r="2.5" fill="#38a048" />
          <circle cx="14" cy="12.5" r="2.3" fill="#f0b020" />
          <circle cx="12" cy="25" r="2.5" fill="#3880d8" />
          <path d="M14 23L25 8l3 2-11 15z" fill="#d8923c" />
          <path d="M24 9l4-8 2 1-1 8z" fill="#b86a30" />
        </svg>
      </TaskButton>
    </div>
    <div className="relative flex h-full items-center gap-3 text-[11px] text-white">
      <button aria-label="Hiện biểu tượng ẩn">
        <svg width="7" height="4" viewBox="0 0 8 5"><path d="M0 5h8L4 0z" fill="#fff" /></svg>
      </button>
      <svg width="15" height="12" viewBox="0 0 15 12"><path d="M0 10h2v2H0zM3 8h2v4H3zM6 5h2v7H6zM9 3h2v9H9zM12 0h2v12h-2z" fill="#fff" /></svg>
      <svg width="10" height="14" viewBox="0 0 10 14"><path d="M1 5h3l4-4v12L4 9H1z" fill="#fff" /></svg>
      <div className="flex w-[68px] flex-col items-center pr-1 leading-[17px]">
        <span>10:26 AM</span>
        <span>7/31/2024</span>
      </div>
      <button aria-label="Hiện màn hình" className="-ml-2 h-full w-3 border border-[#6c8cb0] bg-[#1d4a80]" />
    </div>
  </div>
);

// --- WATERMARK ---

const shieldSpots: number[][] = [
  [-752, -626], [-369, -730], [493, -545], [112, -443], [-267, -340], [-651, -237], [382, -102], [0, 0], [-381, 103],
];

const Watermark = () => (
  <svg className="pointer-events-none absolute inset-0 z-10 h-full w-full" aria-hidden="true">
    {shieldSpots.map(([x, y]) => (
      <path
        key={x}
        transform={`translate(${x} ${y})`}
        fill="#b0b0b0"
        fillOpacity=".42"
        fillRule="evenodd"
        d="M771 633Q815 626 835 594Q865 615 910 597Q925 632 927 664C926 702 908 732 880 757C842 754 812 738 795 710C778 684 771 660 771 633ZM834 640L859 632L866 659L893 653L898 677L872 684L880 710L855 718L847 692L821 699L814 673L841 667Z"
      />
    ))}
  </svg>
);

export default function App() {
  return (
    <div className="relative flex min-h-screen flex-col overflow-hidden bg-[#f0f0f0] font-['Open_Sans','Noto_Sans',sans-serif] text-[12px] leading-[16px] text-[#111]">
      <header className="flex h-[22px] items-center gap-1 border-b border-[#4d7396] bg-[linear-gradient(90deg,#b9dcf2_0%,#a9d3f7_35%,#b3d8fa_80%,#8cc4ee_83%,#5c9cd4_86%,#a4d0f4_89%,#c4dcf0_100%)] pl-0.5">
        <BrandMark />
        <h1 className="font-['Roboto',sans-serif] text-[12px]">6848369 - GlobalFemicServices-Server - Hedge - Global Femic Services Limited - [XAUUSD.stn,Daily]</h1>
        <div className="ml-auto mr-[3px] flex h-[17px] self-start overflow-hidden rounded-b-[4px] border border-t-0 border-[#3c5068]">
          <button aria-label="Thu nhỏ cửa sổ" className="flex w-7 items-center justify-center border-r border-[#5a6c80] bg-gradient-to-b from-[#d4e2ee] to-[#a0b8cc]">
            <svg width="12" height="5" viewBox="0 0 12 5"><rect x=".5" y=".5" width="11" height="4" fill="#fff" stroke="#445" /></svg>
          </button>
          <button aria-label="Khôi phục" className="flex w-[27px] items-center justify-center border-r border-[#5a6c80] bg-gradient-to-b from-[#d4e2ee] to-[#a0b8cc]">
            <svg width="12" height="12" viewBox="0 0 12 12" fill="#fff" stroke="#445"><path d="M3.500.5h8v8h-8z" /><path d="M.5 3.500h8v8h-8z" /><path d="M3.500 6.500h2v2h-2z" /></svg>
          </button>
          <button aria-label="Đóng cửa sổ" className="flex w-[46px] items-center justify-center bg-gradient-to-b from-[#e0988c] via-[#c84030] to-[#d86048]">
            <svg width="12" height="10" viewBox="0 0 12 10"><path d="M2 1l8 8M10 1L2 9" stroke="#433" strokeWidth="4" /><path d="M2 1l8 8M10 1L2 9" stroke="#fff" strokeWidth="2.5" /></svg>
          </button>
        </div>
      </header>

      <nav className="flex h-[21px] items-center border-b border-[#aaa] bg-[#f1f1f1] pl-1.5">
        <svg width="14" height="14" viewBox="0 0 14 14" fill="none" stroke={GREEN}><path d="M3.500 0v3M3.500 10v3M10.500 0v3M10.500 10v3" /><path d="M1.500 3.500h4v7h-4zM8.500 3.500h4v7h-4z" strokeWidth="1.4" /></svg>
        {menuItems.map((item) => (
          <button key={item} className="px-[11px]">{item}</button>
        ))}
        <div className="ml-auto mr-2 flex items-center gap-3">
          <button aria-label="Thu nhỏ"><svg width="8" height="8" viewBox="0 0 8 8"><path d="M0 7h8" stroke="#999" strokeWidth="1.5" /></svg></button>
          <button aria-label="Khôi phục"><svg width="8" height="8" viewBox="0 0 8 8" fill="none" stroke="#999"><path d="M.5 2.500h5v5h-5zM3 .5h4.500V5" /></svg></button>
          <button aria-label="Đóng"><Cross color="#999" /></button>
        </div>
      </nav>

      <Toolbar />

      <main className="flex">
        <MarketWatch />
        <section className="ml-1 min-w-0 flex-1">
          <div className="relative mr-0.5">
            <Chart />
            <OneClickTrade />
          </div>
          <div className="mt-0.5 flex h-[21px] items-start border-t border-black text-[11px] text-[#888]">
            <button className="h-5 px-3">XAUUSD.stn,H1</button>
            <button className="-mt-px ml-1 h-5 border-2 border-t-0 border-black bg-white px-2.5 text-black">XAUUSD.stn,Daily</button>
            <div className="ml-auto flex h-5 items-center gap-4 pr-2.5">
              <button aria-label="Trước"><svg width="4" height="7" viewBox="0 0 4 7"><path d="M4 0v7L0 3.500z" fill="#888" /></svg></button>
              <button aria-label="Sau"><svg width="4" height="7" viewBox="0 0 4 7"><path d="M0 0v7l4-3.500z" fill="#888" /></svg></button>
            </div>
          </div>
        </section>
      </main>

      <Toolbox />
      <StatusBar />
      <Taskbar />
      <Watermark />
    </div>
  );
}
